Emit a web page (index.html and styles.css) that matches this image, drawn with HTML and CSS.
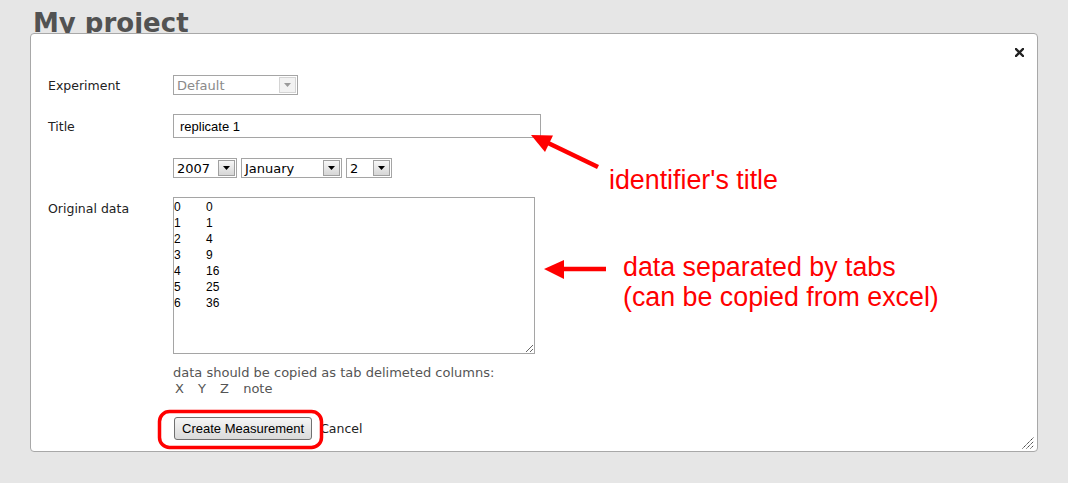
FILE: index.html
```html
<!DOCTYPE html>
<html>
<head>
<meta charset="utf-8">
<title>My project</title>
<link rel="stylesheet" href="styles.css">
</head>
<body>
<h1 class="page-title">My project</h1>

<div class="dialog">
  <div class="dialog-bar">
    <svg class="close" width="9" height="9" viewBox="0 0 9 9"><path d="M1 1 L8 8 M8 1 L1 8" stroke="#222" stroke-width="2.4" stroke-linecap="square"/></svg>
  </div>
  <form class="form">
    <div class="row row-exp">
      <label class="lbl">Experiment</label>
      <div class="select disabled w-exp">
        <span class="val">Default</span>
        <span class="btn"><svg width="7" height="4" viewBox="0 0 7 4"><path d="M0 0 H7 L3.5 4 Z"/></svg></span>
      </div>
    </div>
    <div class="row row-title">
      <label class="lbl">Title</label>
      <input class="text-input" type="text" value="replicate 1">
    </div>
    <div class="row row-date">
      <span class="lbl"></span>
      <div class="date-group">
        <div class="select w-year">
          <span class="val">2007</span>
          <span class="btn"><svg width="7" height="4" viewBox="0 0 7 4"><path d="M0 0 H7 L3.5 4 Z"/></svg></span>
        </div>
        <div class="select w-month">
          <span class="val">January</span>
          <span class="btn"><svg width="7" height="4" viewBox="0 0 7 4"><path d="M0 0 H7 L3.5 4 Z"/></svg></span>
        </div>
        <div class="select w-day">
          <span class="val">2</span>
          <span class="btn"><svg width="7" height="4" viewBox="0 0 7 4"><path d="M0 0 H7 L3.5 4 Z"/></svg></span>
        </div>
      </div>
    </div>
    <div class="row row-data">
      <label class="lbl lbl-top">Original data</label>
      <textarea class="data-area">0&#9;0
1&#9;1
2&#9;4
3&#9;9
4&#9;16
5&#9;25
6&#9;36</textarea>
    </div>
    <div class="row row-help">
      <span class="lbl"></span>
      <div class="help">data should be copied as tab delimeted columns:
<span class="cols">X    Y    Z    note</span></div>
    </div>
    <div class="row row-actions">
      <span class="lbl"></span>
      <div class="actions">
        <button type="button" class="btn-create">Create Measurement</button>
        <a class="cancel">Cancel</a>
      </div>
    </div>
  </form>
  <svg class="grip" width="12" height="12" viewBox="0 0 12 12">
    <path d="M0.5 11.5 L11.5 0.5 M4.5 11.5 L11.5 4.5 M8.5 11.5 L11.5 8.5" stroke="#333" stroke-width="1" stroke-dasharray="1.4 0.6"/>
  </svg>
</div>

<svg class="annot" width="1068" height="483" viewBox="0 0 1068 483">
  <line x1="598" y1="167" x2="546" y2="142" stroke="#ff0000" stroke-width="4.5"/>
  <polygon points="531,135 553,135.5 545,152" fill="#ff0000"/>
  <line x1="558" y1="269" x2="606" y2="269" stroke="#ff0000" stroke-width="4.5"/>
  <polygon points="544,269 564,260 564,279" fill="#ff0000"/>
  <rect x="159.5" y="411.5" width="162" height="36" rx="10" ry="10" fill="none" stroke="#ff0000" stroke-width="3.5"/>
</svg>
<div class="note note-title">identifier's title</div>
<div class="note note-data">data separated by tabs<br>(can be copied from excel)</div>
</body>
</html>
```
FILE: styles.css
```css
html, body {
  margin: 0;
  padding: 0;
}
body {
  background: #e6e6e6;
  width: 1068px;
  height: 483px;
  overflow: hidden;
  position: relative;
  font-family: "DejaVu Sans", Verdana, sans-serif;
}
.page-title {
  margin: 0;
  padding: 8px 0 0 33px;
  font-family: "DejaVu Sans", Verdana, sans-serif;
  font-weight: bold;
  font-size: 26px;
  line-height: 30px;
  color: #525252;
}
.dialog {
  position: absolute;
  left: 30px;
  top: 33px;
  width: 1008px;
  height: 419px;
  box-sizing: border-box;
  background: #fff;
  border: 1px solid #a8a8a8;
  border-radius: 4px;
}
.dialog-bar {
  display: flex;
  justify-content: flex-end;
  padding: 14px 13px 0 0;
  height: 9px;
}
.close {
  display: block;
}
.form {
  margin: 18px 0 0 0;
  padding-left: 17px;
}
.row {
  display: grid;
  grid-template-columns: 125px auto;
  align-items: center;
  justify-content: start;
}
.row-exp { height: 20px; margin-bottom: 19px; }
.row-title { height: 24px; margin-bottom: 20px; }
.row-date { height: 20px; margin-bottom: 19px; }
.row-data { align-items: start; }
.row-help { margin-top: 11px; }
.row-actions { margin-top: 20px; }
.lbl {
  font-size: 12.5px;
  line-height: 15px;
  color: #222;
  padding-top: 1px;
}
.lbl-top {
  padding-top: 4px;
}
.select {
  display: flex;
  box-sizing: border-box;
  height: 20px;
  border: 1px solid #a5a5a5;
  background: #fff;
}
.select .val {
  flex: 1;
  padding-left: 3px;
  font-size: 13px;
  line-height: 19px;
  color: #000;
  white-space: nowrap;
  overflow: hidden;
}
.select .btn {
  box-sizing: border-box;
  width: 17px;
  height: 16px;
  margin: 1px;
  border: 1px solid #a0a0a0;
  background: linear-gradient(#f7f7f7, #d6d6d6);
  display: flex;
  align-items: center;
  justify-content: center;
}
.select .btn svg {
  display: block;
  fill: #000;
}
.select.disabled .val {
  color: #8a8a8a;
}
.select.disabled .btn {
  border-color: #d4d4d4;
  background: #f2f2f2;
}
.select.disabled .btn svg {
  fill: #9a9a9a;
}
.w-exp { width: 125px; }
.w-year { width: 64px; }
.w-month { width: 101px; }
.w-day { width: 46px; }
.date-group {
  display: flex;
  gap: 4px;
}
.text-input {
  box-sizing: border-box;
  width: 368px;
  height: 24px;
  margin: 0;
  border: 1px solid #a5a5a5;
  padding: 0 0 0 6px;
  font-family: "Liberation Sans", Arial, sans-serif;
  font-size: 13px;
  color: #000;
  background: #fff;
  outline: none;
}
.data-area {
  display: block;
  box-sizing: border-box;
  width: 362px;
  height: 157px;
  margin: 0;
  padding: 1px 0 0 0;
  border: 1px solid #a5a5a5;
  font-family: "Liberation Sans", Arial, sans-serif;
  font-size: 12px;
  line-height: 16px;
  color: #000;
  tab-size: 32px;
  -moz-tab-size: 32px;
  white-space: pre;
  overflow: hidden;
  outline: none;
}
.help {
  font-size: 13px;
  line-height: 16px;
  color: #555;
  white-space: pre;
}
.cols {
  padding-left: 2px;
  word-spacing: -0.6px;
}
.actions {
  display: flex;
  align-items: center;
}
.btn-create {
  box-sizing: border-box;
  height: 23px;
  margin: 0 0 0 1px;
  padding: 0 7px;
  border: 1px solid #707070;
  border-radius: 3px;
  background: linear-gradient(#f5f5f5, #dadada);
  font-family: "Liberation Sans", Arial, sans-serif;
  font-size: 13px;
  color: #000;
}
.cancel {
  margin-left: 8px;
  font-size: 12.5px;
  color: #222;
}
.grip {
  position: absolute;
  right: 3px;
  bottom: 2px;
}
.annot {
  position: absolute;
  left: 0;
  top: 0;
  pointer-events: none;
}
.note {
  position: absolute;
  font-family: "Liberation Sans", Arial, sans-serif;
  font-size: 26.8px;
  line-height: 30px;
  color: #ff0000;
  white-space: nowrap;
}
.note-title {
  left: 609px;
  top: 165px;
}
.note-data {
  left: 623px;
  top: 252px;
}
```
